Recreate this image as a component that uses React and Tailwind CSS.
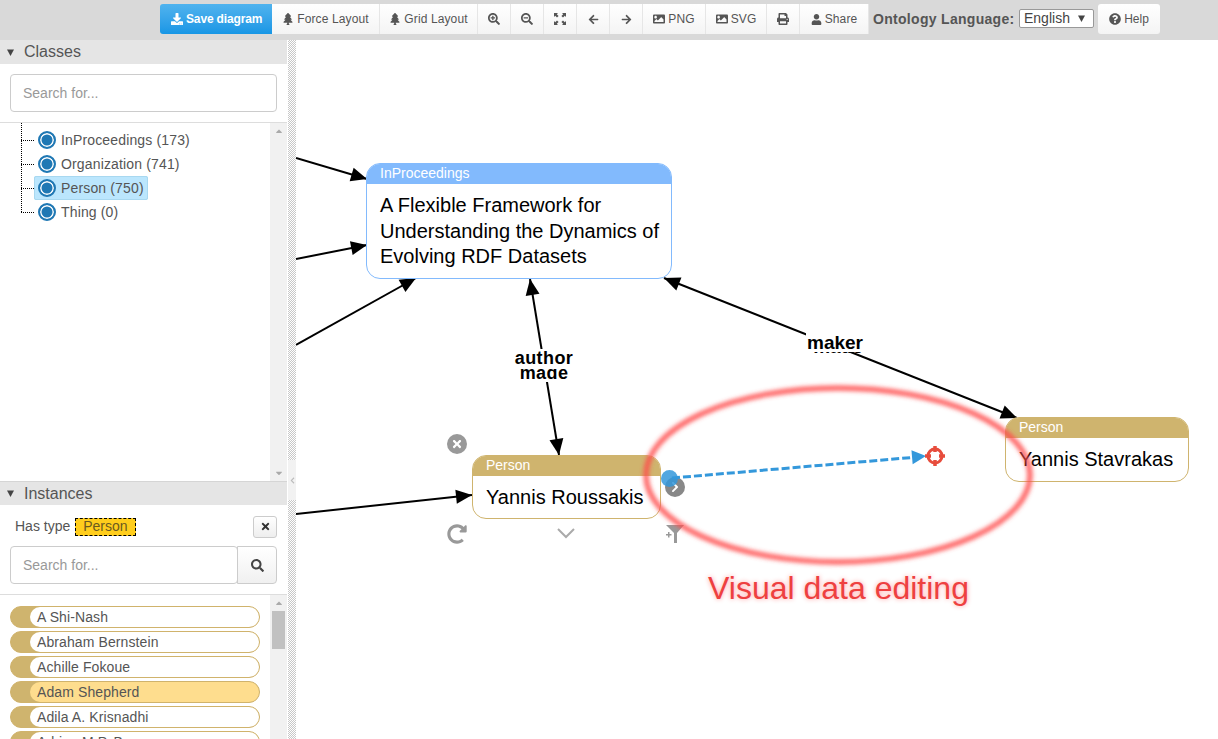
import React from "react";
import { FaDownload, FaTree, FaSearchPlus, FaSearchMinus, FaArrowLeft, FaArrowRight, FaImage, FaPrint, FaUser, FaQuestionCircle, FaTimes, FaSearch, FaCaretDown, FaCaretUp, FaChevronLeft, FaChevronRight, FaRedoAlt } from "react-icons/fa";

const font = "font-['Liberation_Sans',Arial,sans-serif]";

function FitIcon() {
  return (
    <svg width="12" height="12" viewBox="0 0 12 12" fill="currentColor">
      <path d="M0 0h4L2.8 1.2 4.6 3 3 4.6 1.2 2.8 0 4zM12 0v4l-1.200-1.200L9 4.600 7.400 3l1.800-1.800L8 0zM0 12V8l1.200 1.200L3 7.400 4.600 9l-1.800 1.800L4 12zM12 12H8l1.200-1.200L7.400 9 9 7.400l1.800 1.800L12 8z" />
    </svg>
  );
}

function Tri({ size = 7 }) {
  return (
    <svg width={size} height={size} viewBox="0 0 7 7" fill="currentColor">
      <path d="M0 .5h7L3.500 7z" />
    </svg>
  );
}

function ToolBtn({ icon, label, w }) {
  return (
    <button className={`flex h-[30px] items-center justify-center gap-[3px] border-r border-[#e6e6e6] bg-gradient-to-b from-white to-[#f4f4f4] text-[12px] tracking-[0.12px] text-[#555] ${w}`}>
      {icon}
      {label && <span>{label}</span>}
    </button>
  );
}

function Toolbar() {
  return (
    <div className="flex h-10 items-start bg-[#d9d9d9] pl-[160px] pt-1">
      <button className="flex h-[30px] w-[112px] items-center gap-[3px] rounded-l-[3px] bg-gradient-to-b from-[#4fb3ee] to-[#1696e5] pl-[11px] text-[12px] font-bold tracking-[-0.15px] text-white">
        <FaDownload size={12} />
        <span>Save diagram</span>
      </button>
      <ToolBtn w="w-[108px]" icon={<FaTree size={12} />} label="Force Layout" />
      <ToolBtn w="w-[98px]" icon={<FaTree size={12} />} label="Grid Layout" />
      <ToolBtn w="w-[33px]" icon={<FaSearchPlus size={12} />} />
      <ToolBtn w="w-[33px]" icon={<FaSearchMinus size={12} />} />
      <ToolBtn w="w-[33px]" icon={<FitIcon />} />
      <ToolBtn w="w-[33px]" icon={<FaArrowLeft size={11} />} />
      <ToolBtn w="w-[33px]" icon={<FaArrowRight size={11} />} />
      <ToolBtn w="w-[63px]" icon={<FaImage size={12} />} label="PNG" />
      <ToolBtn w="w-[61px]" icon={<FaImage size={12} />} label="SVG" />
      <ToolBtn w="w-[33px]" icon={<FaPrint size={12} />} />
      <ToolBtn w="w-[69px]" icon={<FaUser size={11} />} label="Share" />
      <span className="ml-1 mt-[5px] w-[146px] shrink-0 whitespace-nowrap text-[14px] font-bold tracking-[0.3px] text-[#555]">Ontology Language:</span>
      <div className="mt-[5px] flex h-[19px] w-[75px] items-center justify-between rounded-[2px] border border-[#999] bg-white pl-1 pr-[8px] text-[14px] text-[#444]">
        <span>English</span>
        <Tri size={7} />
      </div>
      <button className="ml-1 flex h-[30px] w-[62px] items-center justify-center gap-[3px] rounded-[3px] bg-gradient-to-b from-white to-[#f4f4f4] text-[12px] text-[#555]">
        <FaQuestionCircle size={12} />
        <span>Help</span>
      </button>
    </div>
  );
}

function SearchBox() {
  return (
    <div className="flex h-[38px] min-w-0 flex-1 items-center rounded-[4px] border border-[#ccc] bg-white pl-3 text-[14px] text-[#999]">
      Search for...
    </div>
  );
}

function Node({ pos, w, h, color, border, type, children }) {
  return (
    <div className={`absolute overflow-hidden rounded-[14px] border bg-white ${pos} ${w} ${h} ${border}`}>
      <div className={`h-5 px-[13px] text-[14px] leading-[18px] text-white ${color}`}>{type}</div>
      <div className="whitespace-nowrap pl-[13px] pt-[9px] text-[20px] leading-[25.7px] text-black">{children}</div>
    </div>
  );
}

const classes = [
  ["InProceedings (173)", false],
  ["Organization (741)", false],
  ["Person (750)", true],
  ["Thing (0)", false],
];

const people = [
  ["A Shi-Nash", false],
  ["Abraham Bernstein", false],
  ["Achille Fokoue", false],
  ["Adam Shepherd", true],
  ["Adila A. Krisnadhi", false],
  ["Adrian M.P. Bra", false],
];

function Sidebar() {
  return (
    <div className="flex h-full w-[287px] shrink-0 flex-col overflow-hidden text-[#555]">
      <div className="flex h-6 items-center bg-[#e5e5e5] pl-[7px] text-[16px]">
        <span className="mr-[10px] text-[#444]"><Tri /></span>
        Classes
      </div>
      <div className="flex h-[59px] items-start border-b border-[#ddd] px-[10px] pt-[10px]">
        <SearchBox />
      </div>
      <div className="flex h-[358px]">
        <div className="relative flex-1 pl-[21px] pt-[5px]">
          <div className="absolute left-[21px] top-0 h-[89px] border-l border-dotted border-black" />
          {classes.map(([t, sel]) => (
            <div key={t} className="flex h-6 items-center">
              <div className="w-[13px] border-t border-dotted border-black" />
              <div className={`flex h-6 items-center gap-[5px] rounded-[2px] pl-[4px] pr-[4px] text-[14px] tracking-[0.15px] ${sel ? "bg-[#bbe6fd] outline outline-1 -outline-offset-1 outline-[#a8d8f0]" : ""}`}>
                <span className="h-[18px] w-[18px] rounded-full border-2 border-[#1f78b4] bg-[#1f78b4] shadow-[inset_0_0_0_1.500px_white]" />
                <span>{t}</span>
              </div>
            </div>
          ))}
        </div>
        <div className="flex w-[17px] flex-col items-center justify-between bg-[#f1f1f1] py-[3px] text-[#aaa]">
          <FaCaretUp size={10} />
          <FaCaretDown size={10} />
        </div>
      </div>
      <div className="flex h-[24px] items-center border-t border-[#d5d5d5] bg-[#e5e5e5] pl-[7px] text-[16px]">
        <span className="mr-[10px] text-[#444]"><Tri /></span>
        Instances
      </div>
      <div className="flex h-[41px] items-center pl-[15px] pr-[10px] pt-[2px] text-[14px]">
        <span>Has type</span>
        <span className="ml-[5px] flex h-[18px] items-center border border-dashed border-black bg-[#ffcd1c] px-[7px] text-[#6b5a20]">Person</span>
        <button className="ml-auto flex h-[22px] w-6 items-center justify-center rounded-[3px] border border-[#ccc] bg-gradient-to-b from-white to-[#eee] text-[#333]">
          <FaTimes size={11} />
        </button>
      </div>
      <div className="flex h-[49px] items-start border-b border-[#ddd] px-[10px]">
        <SearchBox />
        <button className="-ml-px flex h-[38px] w-10 items-center justify-center rounded-r-[4px] border border-[#ccc] bg-gradient-to-b from-white to-[#f0f0f0] text-[#444]">
          <FaSearch size={13} />
        </button>
      </div>
      <div className="flex min-h-0 flex-1">
        <div className="flex flex-1 flex-col gap-[3px] overflow-hidden px-[10px] pt-[11px]">
          {people.map(([t, sel]) => (
            <div key={t} className="flex h-[22px] shrink-0 rounded-[11px] border border-[#d0b36c] bg-[#cfb46e]">
              <div className={`ml-[19px] flex flex-1 items-center rounded-[11px] pl-[7px] text-[14px] tracking-[0.1px] ${sel ? "bg-[#fedd8e]" : "bg-white"}`}>{t}</div>
            </div>
          ))}
        </div>
        <div className="flex w-[17px] flex-col items-center bg-[#f1f1f1] pt-[3px] text-[#aaa]">
          <FaCaretUp size={10} />
          <div className="mt-[3px] h-[38px] w-[13px] bg-[#c1c1c1]" />
        </div>
      </div>
    </div>
  );
}

function Splitter() {
  return (
    <div className="flex h-full w-[9px] shrink-0 flex-col border-l border-white bg-[repeating-conic-gradient(#c8c8c8_0_25%,#ffffff_0_50%)] bg-[length:2px_2px]">
      <div className="mt-[420px] flex h-10 items-center justify-center bg-[#f2f2f2] text-[#bbb]">
        <FaChevronLeft size={7} />
      </div>
    </div>
  );
}

function Head({ x1, y1, x2, y2, color = "black", len = 16, wid = 7 }) {
  const d = Math.hypot(x2 - x1, y2 - y1);
  const ux = (x2 - x1) / d;
  const uy = (y2 - y1) / d;
  const bx = x2 - ux * len;
  const by = y2 - uy * len;
  return <polygon points={`${x2},${y2} ${bx - uy * wid},${by + ux * wid} ${bx + uy * wid},${by - ux * wid}`} fill={color} />;
}

function Edge({ a, b, both }) {
  return (
    <g>
      <line x1={a[0]} y1={a[1]} x2={b[0]} y2={b[1]} stroke="black" strokeWidth="2" />
      <Head x1={a[0]} y1={a[1]} x2={b[0]} y2={b[1]} />
      {both && <Head x1={b[0]} y1={b[1]} x2={a[0]} y2={a[1]} />}
    </g>
  );
}

function Canvas() {
  return (
    <div className={`relative h-full flex-1 overflow-hidden bg-white ${font}`}>
      <svg className="absolute left-0 top-0" width="922" height="699" viewBox="296 40 922 699">
        <Edge a={[296, 158]} b={[367, 179]} />
        <Edge a={[296, 259]} b={[367, 245]} />
        <Edge a={[296, 345]} b={[416, 278]} />
        <Edge a={[296, 514]} b={[472, 495]} />
        <Edge a={[530, 279]} b={[559, 455]} both />
        <Edge a={[664, 278]} b={[1017, 418]} both />
      </svg>

      <Node pos="left-[70px] top-[123px]" w="w-[306px]" h="h-[116px]" color="bg-[#82bafd]" border="border-[#82bafd]" type="InProceedings">
        A Flexible Framework for<br />Understanding the Dynamics of<br />Evolving RDF Datasets
      </Node>
      <Node pos="left-[176px] top-[415px]" w="w-[189px]" h="h-[64px]" color="bg-[#cfb46e]" border="border-[#cfb46e]" type="Person">
        Yannis Roussakis
      </Node>
      <Node pos="left-[709px] top-[377px]" w="w-[184px]" h="h-[65px]" color="bg-[#cfb46e]" border="border-[#cfb46e]" type="Person">
        Yannis Stavrakas
      </Node>

      <div className="absolute left-[218px] top-[309px] w-[60px] text-center text-[18px] font-bold tracking-[0.4px] text-black">
        <div className="relative z-10 h-5 bg-white leading-[18px]">author</div>
        <div className="-mt-[5px] bg-white leading-[18px]">made</div>
      </div>
      <div className="absolute left-[510px] top-[293px] w-[64px] text-center text-[19px] font-bold text-black">
        <div className="relative z-10 h-[19px] bg-white pl-px text-left leading-[19px]">maker</div>
        <div className="-mt-[15px] leading-[19px]">made</div>
      </div>

      <div className="absolute left-[151px] top-[394px] flex h-5 w-5 items-center justify-center rounded-full bg-[#999] text-white">
        <FaTimes size={12} />
      </div>
      <div className="absolute left-[151px] top-[484px] text-[#999]">
        <FaRedoAlt size={20} />
      </div>
      <div className="absolute left-[261px] top-[487px] text-[#aaa]">
        <svg width="18" height="14" viewBox="0 0 18 14" fill="none" stroke="currentColor" strokeWidth="2">
          <path d="M1 2l8 8 8-8" />
        </svg>
      </div>
      <div className="absolute left-[369px] top-[484px] text-[#999]">
        <svg width="20" height="20" viewBox="0 0 20 20" fill="currentColor">
          <path d="M1 1h18l-7 8v10h-3v-10z" />
          <path d="M1 10h2v-2h1.500v2h2v1.500h-2v2h-1.500v-2h-2z" fill="#999" />
        </svg>
      </div>
      <div className="absolute left-[369px] top-[437px] flex h-5 w-5 items-center justify-center rounded-full bg-[#888] text-white">
        <FaChevronRight size={12} />
      </div>
      <div className="absolute left-[365px] top-[430px] h-[17px] w-[17px] rounded-full bg-[#3498db]/85" />

      <svg className="absolute left-0 top-0" width="922" height="699" viewBox="296 40 922 699">
        <line x1="672" y1="478" x2="912" y2="457.500" stroke="#3498db" strokeWidth="3" strokeDasharray="8 3" />
        <Head x1={672} y1={478} x2={926} y2={456} color="#3498db" len={14} wid={7} />
        <defs>
          <filter id="glow" x="-10%" y="-20%" width="120%" height="140%">
            <feGaussianBlur stdDeviation="2" />
          </filter>
        </defs>
        <ellipse cx="838" cy="475" rx="192" ry="87" fill="none" stroke="#ff4a4a" strokeOpacity="0.85" strokeWidth="5.500" filter="url(#glow)" />
        <g fill="none" stroke="#e74c3c">
          <circle cx="935" cy="456" r="7" strokeWidth="3" />
          <path d="M935 446v6M935 460v6M925 456h6M939 456h6" strokeWidth="3.500" />
        </g>
      </svg>

      <div className="absolute left-[412px] top-[530px] text-[32px] leading-[37px] text-[#ee4040] [text-shadow:0_0_5px_#ff9a9a]">
        Visual data editing
      </div>
    </div>
  );
}

export default function App() {
  return (
    <div className={`h-[739px] w-[1218px] overflow-hidden bg-white ${font}`}>
      <Toolbar />
      <div className="flex h-[699px]">
        <Sidebar />
        <Splitter />
        <Canvas />
      </div>
    </div>
  );
}
